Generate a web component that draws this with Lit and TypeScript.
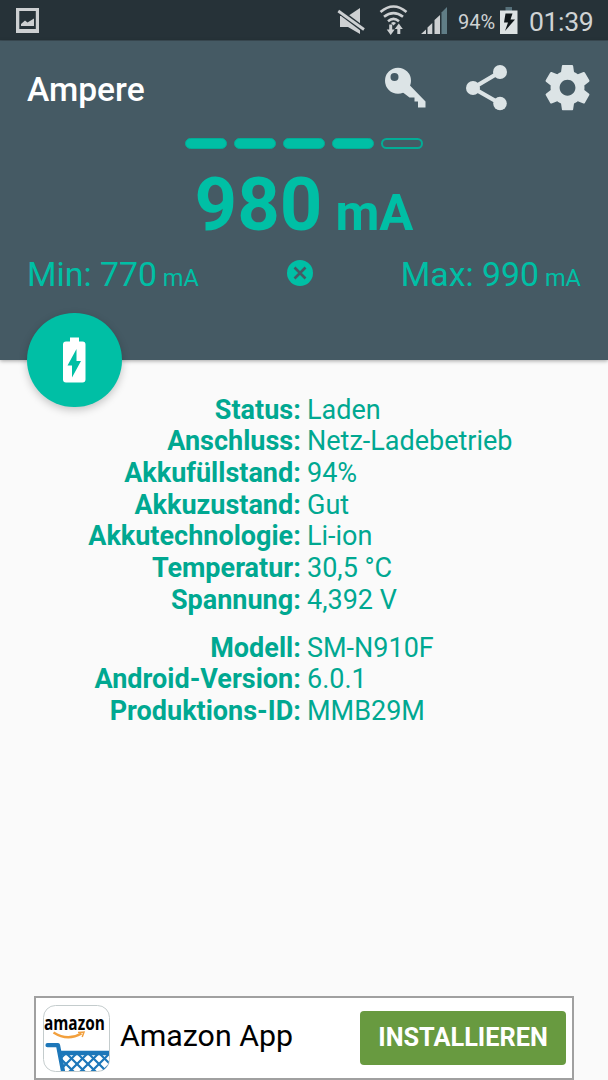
import { LitElement, html, css, svg } from "lit";
import { customElement } from "lit/decorators.js";

const battery: [string, string][] = [
  ["Status:", "Laden"],
  ["Anschluss:", "Netz-Ladebetrieb"],
  ["Akkufüllstand:", "94%"],
  ["Akkuzustand:", "Gut"],
  ["Akkutechnologie:", "Li-ion"],
  ["Temperatur:", "30,5 °C"],
  ["Spannung:", "4,392 V"],
];
const device: [string, string][] = [
  ["Modell:", "SM-N910F"],
  ["Android-Version:", "6.0.1"],
  ["Produktions-ID:", "MMB29M"],
];

@customElement("status-bar")
class StatusBar extends LitElement {
  static styles = css`
    :host { display: flex; height: 40px; background: #263238; color: #cfd3d4; font-family: Roboto, sans-serif; border-bottom: 1px solid #3c4d56; }
    svg { display: block; flex: none; }
    .spacer { flex: 1; }
    .pct { width: 40px; margin-left: 11px; font-size: 20px; line-height: 44px; white-space: nowrap; }
    .time { width: 79px; margin-left: 9px; font-size: 26.6px; line-height: 44px; white-space: nowrap; font-weight: 400; letter-spacing: -0.4px; }
  `;
  render() {
    return html`
      <svg width="60" height="40" viewBox="0 0 60 40">
        <path fill="#cdd0d2" fill-rule="evenodd" d="M16 8h23v25H16zM19.3 11v18h16.5V11z" />
        <path fill="#cdd0d2" d="M21 26v-2l4-3.5 2.5 2 6.5-4V26z" />
      </svg>
      <div class="spacer"></div>
      <svg width="118" height="40" viewBox="329 0 118 40">
        <path fill="#cdd0d2" d="M340 16h8l12-8v26l-12-7h-8z" />
        <path stroke="#263238" stroke-width="5.600" d="M337 9.500L365 30.500" />
        <path stroke="#cdd0d2" stroke-width="2.800" d="M338.300 11L364 29.500" />
        <g fill="none" stroke="#cdd0d2" stroke-width="2.600">
          <path d="M380.500 12q13-11 26 0M384 16.800q9.500-7.500 19 0M388 21.200q5.500-4.500 11 0" />
        </g>
        <path fill="#cdd0d2" d="M391 23q2.500-1.800 5 0l-2.500 2.500z" />
        <path fill="#cdd0d2" d="M389.200 24.500h3v5h2.500l-4 5.500-4-5.500h2.500zM397.300 34h3v-5h2.500l-4-5.500-4 5.500h2.500z" />
        <path fill="#cdd0d2" d="M421 34l5-4.500V34zM427.500 34v-6.500l4.800-4.500V34zM434.500 34V20l5.500-5V34z" />
        <path fill="#607d86" d="M441.500 34V12.500l5.500-5.500V34z" />
      </svg>
      <div class="pct">94%</div>
      <svg width="22" height="40" viewBox="498 0 22 40">
        <path fill="#56707a" d="M505.500 7h6.500v4h-6.500z" />
        <path fill="#dce2e3" d="M500 10.500h17.500V34H500z" />
        <path fill="#10181b" d="M505.500 13.500h7l-2 6h4.500l-10 11.500 3-8.500h-4z" />
      </svg>
      <div class="time">01:39</div>
    `;
  }
}

@customElement("meter-header")
class MeterHeader extends LitElement {
  static styles = css`
    :host { display: flex; flex-direction: column; height: 319px; background: #455a64; color: #00bfa5; font-family: Roboto, sans-serif; box-shadow: 0 1px 4px rgba(0, 0, 0, 0.35); }
    .bar { display: flex; height: 97px; }
    .title { flex: 1; padding-left: 27px; font-size: 33.6px; line-height: 98px; font-weight: 500; color: #fff; }
    .bars { display: flex; justify-content: center; gap: 7px; height: 11px; }
    .seg { box-sizing: border-box; width: 42px; height: 11px; border: 2px solid #03ac96; border-radius: 6px; }
    .full { background: #00bfa5; border-width: 1px; }
    .value { display: flex; justify-content: center; align-items: baseline; gap: 13px; height: 101px; font-size: 74.3px; line-height: 111px; font-weight: 700; }
    .value small { font-size: 50.7px; }
    .range { display: flex; justify-content: space-between; padding: 0 27px; font-size: 33.8px; line-height: 50px; }
    .range small { font-size: 23.6px; margin-left: -2.5px; }
    .range span { white-space: nowrap; }
    svg { display: block; flex: none; }
  `;
  render() {
    return html`
      <div class="bar">
        <div class="title">Ampere</div>
        <svg width="238" height="97" viewBox="370 41 238 97" fill="#dce4e6">
          <path fill-rule="evenodd" d="M398 67.800a13 13 0 1 1 0 26 13 13 0 0 1 0-26zM394.500 73a4 4 0 1 0 0 8 4 4 0 0 0 0-8z" />
          <path d="M401 91l8.500-6 16 16.500v6h-7.500v-6h-3.500v-4h-5z" />
          <g stroke="#dce4e6" stroke-width="4.300"><path d="M500 72L473 88l27 15.500" fill="none" /></g>
          <circle cx="500" cy="72" r="7" /><circle cx="473" cy="88" r="7" /><circle cx="500" cy="103.500" r="6.800" />
          <g transform="translate(540.400 60.600) scale(2.260)">
            <path d="M19.430 12.980c.040-.320.070-.640.070-.980s-.030-.660-.070-.980l2.110-1.650c.190-.150.240-.420.120-.640l-2-3.460c-.120-.220-.390-.300-.610-.220l-2.490 1c-.520-.400-1.080-.730-1.690-.980l-.380-2.650A.488.488 0 0 0 14 2h-4c-.250 0-.460.180-.490.420l-.380 2.650c-.610.250-1.170.590-1.690.980l-2.490-1c-.230-.090-.490 0-.610.220l-2 3.460c-.130.220-.070.490.120.640l2.110 1.650c-.040.320-.070.650-.070.980s.030.660.070.980l-2.110 1.650c-.190.150-.240.420-.120.640l2 3.460c.120.220.390.300.610.220l2.490-1c.520.400 1.080.730 1.690.980l.380 2.650c.030.240.240.420.490.420h4c.250 0 .460-.180.490-.420l.380-2.650c.610-.250 1.170-.590 1.690-.980l2.490 1c.230.090.490 0 .610-.220l2-3.460c.120-.220.070-.490-.120-.640l-2.110-1.650zM12 15.500c-1.930 0-3.500-1.570-3.500-3.500s1.570-3.500 3.500-3.500 3.500 1.570 3.500 3.500-1.570 3.500-3.500 3.500z" />
          </g>
        </svg>
      </div>
      <div class="bars">
        ${[1, 1, 1, 1, 0].map((on) => html`<div class="seg ${on ? "full" : ""}"></div>`)}
      </div>
      <div class="value"><span>980</span><small>mA</small></div>
      <div class="range">
        <span>Min: 770 <small>mA</small></span>
        <svg width="26" height="46" viewBox="0 0 26 46">
          <circle cx="13" cy="23" r="13" fill="#00bfa5" />
          <path d="M7.500 17.500l11 11m0-11l-11 11" stroke="#455a64" stroke-width="2.600" />
        </svg>
        <span>Max: 990 <small>mA</small></span>
      </div>
    `;
  }
}

@customElement("ad-banner")
class AdBanner extends LitElement {
  static styles = css`
    :host { display: flex; align-items: center; box-sizing: border-box; height: 84px; margin: 0 34px; padding: 0 6px 0 7px; border: 2px solid #a0a0a0; background: #fff; font-family: Roboto, sans-serif; }
    svg { display: block; flex: none; }
    .name { flex: 1; padding: 0 0 5px 10px; font-size: 30.3px; color: #000; white-space: nowrap; }
    .btn { width: 206px; height: 54px; border-radius: 4px; background: #689a40; color: #fff; font-size: 25.3px; font-weight: 700; line-height: 54px; text-align: center; }
    .brand { font: 700 19px "Open Sans", sans-serif; }
  `;
  render() {
    const mesh = [];
    for (let x = -43; x < 100; x += 11) {
      mesh.push(svg`<path d="M${x} 48l30 30M${x} 48l-30 30" />`);
    }
    return html`
      <svg width="67" height="67" viewBox="0 0 67 67">
        <defs>
          <clipPath id="tile"><rect x="1" y="1" width="65" height="65" rx="11" /></clipPath>
          <clipPath id="basket"><path d="M16 46h50v20H20z" /></clipPath>
        </defs>
        <rect x=".500" y=".500" width="66" height="66" rx="12" fill="#fff" stroke="#c4cccd" />
        <text class="brand" transform="translate(1 25) scale(.810 1)">amazon</text>
        <path d="M10.500 27.500q14 9 28 1" fill="none" stroke="#f2a03d" stroke-width="2.300" />
        <path d="M35 27.500l6-.500-1.800 5" fill="none" stroke="#f2a03d" stroke-width="1.500" />
        <g clip-path="url(#tile)" fill="none" stroke="#1d77b9">
          <path d="M4.500 40.200H15l5 26" stroke-width="4.200" stroke-linecap="round" stroke-linejoin="round" />
          <path d="M15 48h51" stroke-width="4.500" />
          <g clip-path="url(#basket)" stroke-width="2.200">${mesh}</g>
        </g>
      </svg>
      <div class="name">Amazon App</div>
      <div class="btn">INSTALLIEREN</div>
    `;
  }
}

@customElement("app-root")
class AppRoot extends LitElement {
  static styles = css`
    :host { display: flex; flex-direction: column; position: relative; width: 608px; height: 1080px; overflow: hidden; background: #fafafa; font-family: Roboto, sans-serif; }
    .fab { position: absolute; left: 27px; top: 312.5px; width: 94.5px; height: 94.5px; border-radius: 50%; background: #00bfa5; box-shadow: 0 3px 9px rgba(0, 0, 0, 0.22); }
    .fab svg { display: block; }
    .info { flex: 1; padding-top: 34.6px; }
    .rows { display: grid; grid-template-columns: 300.8px 1fr; column-gap: 6.2px; grid-auto-rows: 31.67px; margin-bottom: 16.500px; font-size: 27px; line-height: 31.67px; color: #00a891; }
    .label { text-align: right; font-weight: 700; }
  `;
  rows(list: [string, string][]) {
    return html`<div class="rows">
      ${list.map(([k, v]) => html`<div class="label">${k}</div><div>${v}</div>`)}
    </div>`;
  }
  render() {
    return html`
      <status-bar></status-bar>
      <meter-header></meter-header>
      <div class="info">${this.rows(battery)}${this.rows(device)}</div>
      <ad-banner></ad-banner>
      <div class="fab">
        <svg width="94" height="94" viewBox="27 313 94 94">
          <path fill="#fff" d="M70 337.500h9v4h3.500q3 0 3 3v35q0 3-3 3H66q-3 0-3-3v-35q0-3 3-3h4z" />
          <path fill="#00bfa5" d="M76.500 349v12h4.500l-9 16.500V365.500h-4.500z" />
        </svg>
      </div>
    `;
  }
}
